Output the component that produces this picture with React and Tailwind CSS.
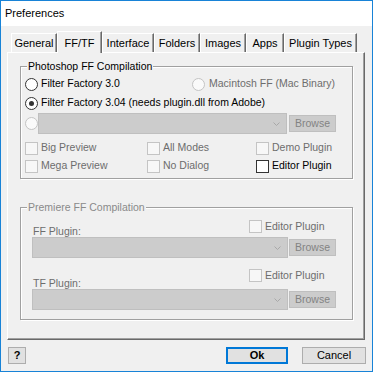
import React from "react";

function Radio({ checked, disabled }) {
  return (
    <span
      className={`w-[13px] h-[13px] rounded-full border shrink-0 flex items-center justify-center ${
        disabled ? "border-[#c4c4c4] bg-[#fafafa]" : "border-[#333333] bg-white"
      }`}
    >
      {checked && <span className="w-[5px] h-[5px] rounded-full bg-[#333333]" />}
    </span>
  );
}

function Check({ disabled }) {
  return (
    <span
      className={`w-[13px] h-[13px] border shrink-0 ${
        disabled ? "border-[#c4c4c4] bg-[#f7f7f7]" : "border-[#333333] bg-white"
      }`}
    />
  );
}

function Combo({ className }) {
  return (
    <div className={`h-[21px] bg-[#cccccc] border border-[#bfbfbf] flex items-center justify-end pr-[6px] ${className}`}>
      <svg width="7" height="4" viewBox="0 0 7 4">
        <path d="M0.5 0.5 L3.5 3.5 L6.5 0.5" stroke="#a8a8a8" fill="none" />
      </svg>
    </div>
  );
}

function Browse() {
  return (
    <div className="w-[47px] h-[17px] bg-[#cccccc] border border-[#bfbfbf] text-[#838383] flex items-center justify-center shrink-0">
      Browse
    </div>
  );
}

function Tab({ label, w, active }) {
  if (active) {
    return (
      <div
        className={`${w} h-[22px] -mb-px z-10 bg-[#f0f0f0] border-l border-t border-r border-l-white border-t-white border-r-[#696969] shadow-[inset_-1px_0_0_#a0a0a0] flex justify-center pt-[3px]`}
      >
        {label}
      </div>
    );
  }
  return (
    <div
      className={`${w} h-[19px] border-l border-t border-r border-l-white border-t-white border-r-[#696969] shadow-[inset_-1px_0_0_#a0a0a0] flex items-center justify-center`}
    >
      {label}
    </div>
  );
}

function Group({ title, dim, children }) {
  return (
    <div className="relative w-[333px] h-[113px] border border-[#a0a0a0] shadow-[inset_1px_1px_0_#ffffff,1px_1px_0_#ffffff]">
      <span
        className={`absolute left-[6px] -top-[7px] px-[1px] bg-[#f0f0f0] leading-[12px] ${dim ? "text-[#8a8a8a]" : "text-black"}`}
      >
        {title}
      </span>
      {children}
    </div>
  );
}

export default function App() {
  const tabs = [
    { label: "General", w: "w-[46px]" },
    { label: "FF/TF", w: "w-[45px]", active: true },
    { label: "Interface", w: "w-[52px]" },
    { label: "Folders", w: "w-[46px]" },
    { label: "Images", w: "w-[46px]" },
    { label: "Apps", w: "w-[38px]" },
    { label: "Plugin Types", w: "w-[73px]" },
  ];

  return (
    <div className="w-[373px] h-[372px] border border-[#1883d7] bg-[#f0f0f0] flex flex-col font-['Liberation_Sans',Arial,sans-serif] text-black overflow-hidden">
      {/* title bar */}
      <div className="h-[25px] bg-white flex items-center px-[4px] text-[11px] shrink-0">Preferences</div>

      <div className="flex flex-col pl-[6px] pt-[5px]">
        {/* tabs */}
        <div className="flex items-end pl-[4px] h-[21px] text-[11px]">
          {tabs.map((t) => (
            <Tab key={t.label} {...t} />
          ))}
        </div>

        {/* tab panel */}
        <div className="w-[358px] h-[288px] border border-l-white border-t-white border-r-[#696969] border-b-[#696969] shadow-[inset_-1px_-1px_0_#a0a0a0] text-[10.5px] pl-[12px] pt-[13px]">
          <Group title="Photoshop FF Compilation">
            <div className="flex flex-col pl-[4px] pt-[10px]">
              <div className="flex items-center h-[14px]">
                <div className="w-[167px] flex items-center gap-[3px]">
                  <Radio />
                  <span>Filter Factory 3.0</span>
                </div>
                <div className="flex items-center gap-[4px] text-[#6d6d6d]">
                  <Radio disabled />
                  <span>Macintosh FF (Mac Binary)</span>
                </div>
              </div>
              <div className="flex items-center h-[14px] mt-[5px] gap-[3px]">
                <Radio checked />
                <span>Filter Factory 3.04 (needs plugin.dll from Adobe)</span>
              </div>
              <div className="flex items-center h-[21px] mt-[3px]">
                <Radio disabled />
                <Combo className="w-[249px]" />
                <div className="ml-[2px]">
                  <Browse />
                </div>
              </div>
              <div className="flex items-center h-[14px] mt-[7px] text-[#6d6d6d]">
                <div className="w-[122px] flex items-center gap-[3px]">
                  <Check disabled />
                  <span>Big Preview</span>
                </div>
                <div className="w-[109px] flex items-center gap-[3px]">
                  <Check disabled />
                  <span>All Modes</span>
                </div>
                <div className="flex items-center gap-[3px]">
                  <Check disabled />
                  <span>Demo Plugin</span>
                </div>
              </div>
              <div className="flex items-center h-[14px] mt-[4px]">
                <div className="w-[122px] flex items-center gap-[3px] text-[#6d6d6d]">
                  <Check disabled />
                  <span>Mega Preview</span>
                </div>
                <div className="w-[109px] flex items-center gap-[3px] text-[#6d6d6d]">
                  <Check disabled />
                  <span>No Dialog</span>
                </div>
                <div className="flex items-center gap-[3px]">
                  <Check />
                  <span>Editor Plugin</span>
                </div>
              </div>
            </div>
          </Group>

          <div className="mt-[28px]">
            <Group title="Premiere FF Compilation" dim>
              <div className="flex flex-col pl-[11px] pt-[12px] text-[#6d6d6d]">
                <div className="flex h-[17px]">
                  <span className="w-[217px] self-end pl-[1px] leading-[12px]">FF Plugin:</span>
                  <div className="flex items-center gap-[3px] h-[13px]">
                    <Check disabled />
                    <span>Editor Plugin</span>
                  </div>
                </div>
                <div className="flex items-center h-[21px]">
                  <Combo className="w-[256px]" />
                  <div className="ml-[1px]">
                    <Browse />
                  </div>
                </div>
                <div className="flex h-[20px] mt-[11px]">
                  <span className="w-[217px] self-end pl-[1px] leading-[12px]">TF Plugin:</span>
                  <div className="flex items-center gap-[3px] h-[13px]">
                    <Check disabled />
                    <span>Editor Plugin</span>
                  </div>
                </div>
                <div className="flex items-center h-[21px]">
                  <Combo className="w-[256px]" />
                  <div className="ml-[1px]">
                    <Browse />
                  </div>
                </div>
              </div>
            </Group>
          </div>
        </div>

        {/* bottom buttons */}
        <div className="flex items-center mt-[7px] pl-[1px] text-[11px]">
          <div className="w-[18px] h-[17px] bg-[#e1e1e1] border border-[#adadad] flex items-center justify-center font-bold">
            ?
          </div>
          <div className="ml-[200px] w-[62px] h-[17px] bg-[#e1e1e1] border-2 border-[#0078d7] flex items-center justify-center font-bold">
            Ok
          </div>
          <div className="ml-[14px] w-[64px] h-[17px] bg-[#e1e1e1] border border-[#adadad] flex items-center justify-center">
            Cancel
          </div>
        </div>
      </div>
    </div>
  );
}
